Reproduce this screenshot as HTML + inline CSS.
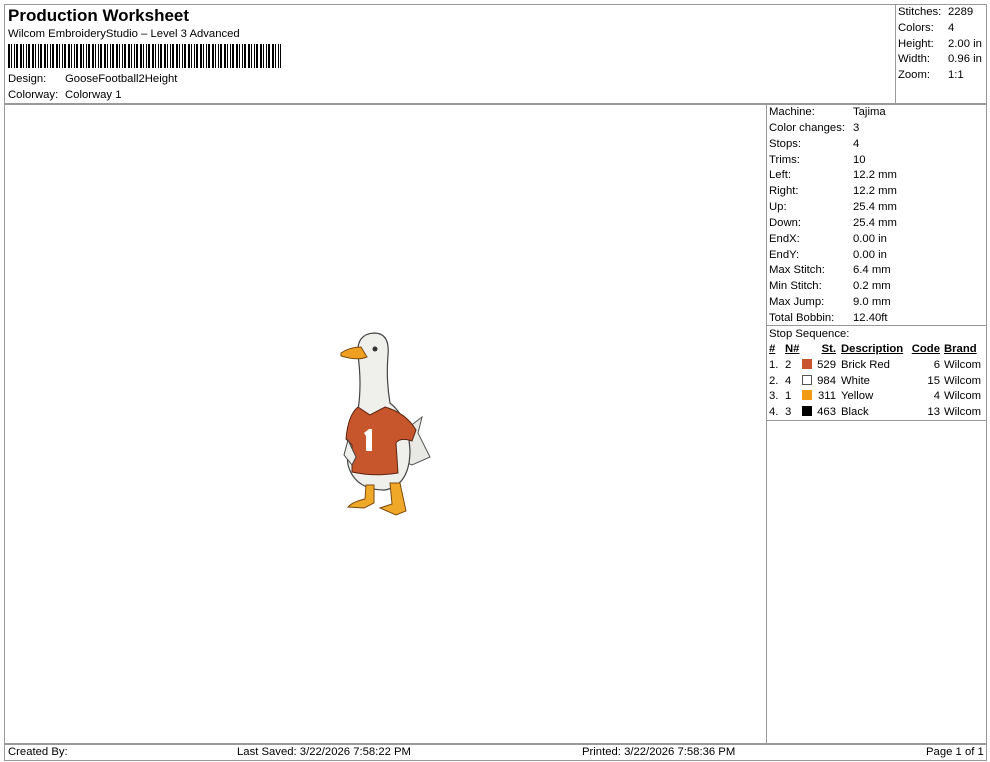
<!DOCTYPE html>
<html><head><meta charset="utf-8"><style>
body{margin:0;width:990px;height:762px;background:#fff;position:relative;overflow:hidden;font-family:"Liberation Sans",Arial,sans-serif;font-size:11.3px;color:#000}
.a{position:absolute;white-space:nowrap}
.l{position:absolute;background:#999}
.u{text-decoration:underline;font-weight:bold}
.sw{display:inline-block;width:10px;height:10px;vertical-align:-1px}
</style></head><body>
<div class="l" style="left:4px;top:4px;width:982px;height:1px"></div>
<div class="l" style="left:4px;top:4px;width:1px;height:757px"></div>
<div class="l" style="left:986px;top:4px;width:1px;height:757px"></div>
<div class="l" style="left:4px;top:103px;width:982px;height:2px"></div>
<div class="l" style="left:895px;top:4px;width:1px;height:100px"></div>
<div class="l" style="left:766px;top:104px;width:1px;height:640px"></div>
<div class="l" style="left:766px;top:325px;width:220px;height:1px"></div>
<div class="l" style="left:766px;top:420px;width:220px;height:1px"></div>
<div class="l" style="left:4px;top:743px;width:982px;height:2px"></div>
<div class="l" style="left:4px;top:760px;width:982px;height:1px"></div>

<div class="a" style="left:8px;top:6px;font-size:17px;font-weight:bold">Production Worksheet</div>
<div class="a" style="left:8px;top:28px">Wilcom EmbroideryStudio – Level 3 Advanced</div>
<div class="a" style="left:8px;top:44px;width:273px;height:24px;background:repeating-linear-gradient(90deg,#000 0 2px,#fff 2px 3px,#000 3px 4px,#fff 4px 6px,#000 6px 7px,#fff 7px 8px,#000 8px 10px,#fff 10px 12px)"></div>
<div class="a" style="left:8px;top:73px">Design:</div><div class="a" style="left:65px;top:73px">GooseFootball2Height</div>
<div class="a" style="left:8px;top:89px">Colorway:</div><div class="a" style="left:65px;top:89px">Colorway 1</div>

<div class="a" style="left:898px;top:5px;line-height:15.8px">Stitches:<br>Colors:<br>Height:<br>Width:<br>Zoom:</div>
<div class="a" style="left:948px;top:5px;line-height:15.8px">2289<br>4<br>2.00 in<br>0.96 in<br>1:1</div>

<div class="a" style="left:769px;top:105px;line-height:15.85px">Machine:<br>Color changes:<br>Stops:<br>Trims:<br>Left:<br>Right:<br>Up:<br>Down:<br>EndX:<br>EndY:<br>Max Stitch:<br>Min Stitch:<br>Max Jump:<br>Total Bobbin:<br>Stop Sequence:</div>
<div class="a" style="left:853px;top:105px;line-height:15.85px">Tajima<br>3<br>4<br>10<br>12.2 mm<br>12.2 mm<br>25.4 mm<br>25.4 mm<br>0.00 in<br>0.00 in<br>6.4 mm<br>0.2 mm<br>9.0 mm<br>12.40ft</div>

<div class="a" style="left:769px;top:342px;line-height:15.8px"><span class="u">#</span><br>1.<br>2.<br>3.<br>4.</div>
<div class="a" style="left:785px;top:342px;line-height:15.8px"><span class="u">N#</span><br>2<br>4<br>1<br>3</div>
<div class="a" style="left:802px;top:342px;line-height:15.8px"><br><span class="sw" style="background:#c8552d"></span><br><span class="sw" style="border:1px solid #555;width:8px;height:8px"></span><br><span class="sw" style="background:#f39a14"></span><br><span class="sw" style="background:#000"></span></div>
<div class="a" style="left:812px;top:342px;line-height:15.8px;text-align:right;width:24px"><span class="u">St.</span><br>529<br>984<br>311<br>463</div>
<div class="a" style="left:841px;top:342px;line-height:15.8px"><span class="u">Description</span><br>Brick Red<br>White<br>Yellow<br>Black</div>
<div class="a" style="left:906px;top:342px;line-height:15.8px;text-align:right;width:34px"><span class="u">Code</span><br>6<br>15<br>4<br>13</div>
<div class="a" style="left:944px;top:342px;line-height:15.8px"><span class="u">Brand</span><br>Wilcom<br>Wilcom<br>Wilcom<br>Wilcom</div>

<svg class="a" style="left:330px;top:325px" width="110" height="195" viewBox="0 0 110 195">
<path d="M62 115 L92 92 L88 108 L100 132 L82 140 L70 135Z" fill="#e8e8e4" stroke="#555" stroke-width="1"/>
<path d="M28 30 Q26 9 44 8 Q60 8 58 30 Q56 55 60 78 Q78 92 80 125 Q80 160 55 165 Q25 165 18 140 Q14 110 28 85 Q32 60 28 30Z" fill="#efefec" stroke="#444" stroke-width="1.2"/>
<path d="M11 28 Q20 22 31 22 L37 32 Q28 36 11 31Z" fill="#f0a020" stroke="#7a4a10" stroke-width="1"/>
<circle cx="45" cy="24" r="2.5" fill="#333"/>
<path d="M28 82 L40 90 L55 82 Q76 88 86 105 L82 116 Q70 112 66 118 L68 148 Q45 152 22 147 L22 120 L16 114 Q18 90 28 82Z" fill="#c8562c" stroke="#5a2410" stroke-width="1"/>
<path d="M34 108 L39 104 L42 104 L42 126 L36 126 L36 111Z" fill="#fff"/>
<path d="M36 160 L35 174 Q22 177 18 182 L34 183 L44 178 L44 160Z" fill="#f0a828" stroke="#7a4a10" stroke-width="1"/>
<path d="M60 158 L62 179 L50 183 L66 190 L76 186 L70 158Z" fill="#f0a828" stroke="#7a4a10" stroke-width="1"/>
<path d="M18 115 L14 130 L22 140 L26 132Z" fill="#efefec" stroke="#444" stroke-width="1"/>
</svg>

<div class="a" style="left:8px;top:746px">Created By:</div>
<div class="a" style="left:237px;top:746px">Last Saved: 3/22/2026 7:58:22 PM</div>
<div class="a" style="left:582px;top:746px">Printed: 3/22/2026 7:58:36 PM</div>
<div class="a" style="left:926px;top:746px">Page 1 of 1</div>
</body></html>
